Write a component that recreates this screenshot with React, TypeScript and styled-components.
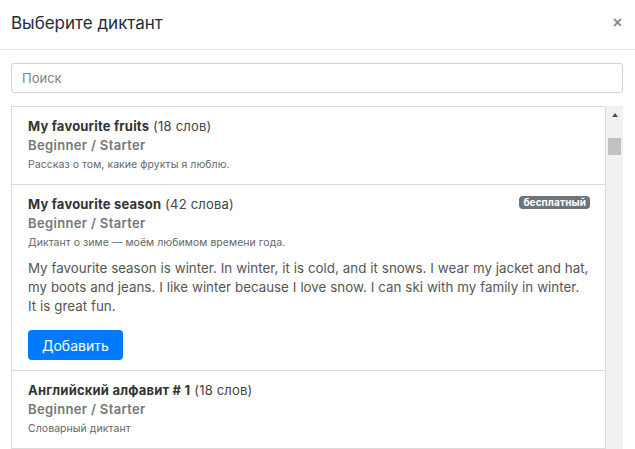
import React from 'react'
import styled, { createGlobalStyle } from 'styled-components'

const GlobalStyle = createGlobalStyle`
  html, body {
    margin: 0;
    padding: 0;
    overflow: hidden;
    background: #fff;
  }
  body {
    font-family: Inter, "Noto Sans", sans-serif;
    color: #333;
  }
  * {
    box-sizing: border-box;
  }
`

interface Dictation {
  id: number
  title: string
  words: string
  level: string
  description: string
  text?: string
  free?: boolean
}

const dictations: Dictation[] = [
  {
    id: 1,
    title: 'My favourite fruits',
    words: '18 слов',
    level: 'Beginner / Starter',
    description: 'Рассказ о том, какие фрукты я люблю.',
  },
  {
    id: 2,
    title: 'My favourite season',
    words: '42 слова',
    level: 'Beginner / Starter',
    description: 'Диктант о зиме — моём любимом времени года.',
    text:
      'My favourite season is winter. In winter, it is cold, and it snows. I wear my jacket and hat, my boots and jeans. I like winter because I love snow. I can ski with my family in winter. It is great fun.',
    free: true,
  },
  {
    id: 3,
    title: 'Английский алфавит # 1',
    words: '18 слов',
    level: 'Beginner / Starter',
    description: 'Словарный диктант',
  },
]

const App: React.FC = () => {
  return (
    <>
      <GlobalStyle />
      <StyledModal>
        <StyledHeader>
          <StyledTitle>Выберите диктант</StyledTitle>
          <StyledClose type="button" aria-label="Закрыть">
            ×
          </StyledClose>
        </StyledHeader>
        <StyledBody>
          <StyledSearch placeholder="Поиск" />
          <StyledScrollArea>
            <StyledList>
              {dictations.map((d) => (
                <StyledItem key={d.id}>
                  {d.free && <StyledBadge>бесплатный</StyledBadge>}
                  <StyledItemTitle>
                    <strong>{d.title}</strong> ({d.words})
                  </StyledItemTitle>
                  <StyledLevel>{d.level}</StyledLevel>
                  <StyledDescription>{d.description}</StyledDescription>
                  {d.text && (
                    <>
                      <StyledText>{d.text}</StyledText>
                      <StyledButton type="button">Добавить</StyledButton>
                    </>
                  )}
                </StyledItem>
              ))}
            </StyledList>
            <StyledRail aria-hidden>
              <StyledArrow />
              <StyledThumb />
            </StyledRail>
          </StyledScrollArea>
        </StyledBody>
      </StyledModal>
    </>
  )
}

const StyledModal = styled.div`
  width: 635px;
  background: #fff;
`

const StyledHeader = styled.div`
  display: flex;
  align-items: center;
  justify-content: space-between;
  height: 50px;
  padding: 0 13px 3px 11px;
  border-bottom: 1px solid #e5e5e5;
`

const StyledTitle = styled.h5`
  margin: 0;
  font-size: 17px;
  font-weight: 400;
  color: #1e2d3b;
`

const StyledClose = styled.button`
  border: 0;
  background: none;
  padding: 0;
  font-family: Arial, "Liberation Sans", sans-serif;
  font-size: 16px;
  font-weight: 700;
  line-height: 1;
  color: #8a8a8a;
  cursor: pointer;
`

const StyledBody = styled.div`
  padding: 13px 12px 0 11px;
`

const StyledSearch = styled.input`
  display: block;
  width: 100%;
  height: 30px;
  padding: 0 10px;
  border: 1px solid #ced4da;
  border-radius: 3px;
  font-family: inherit;
  font-size: 13px;
  color: #495057;
  outline: none;

  &::placeholder {
    color: #7b838a;
  }
`

const StyledScrollArea = styled.div`
  display: flex;
  margin-top: 13px;
  height: 343px;
  overflow: hidden;
`

const StyledList = styled.div`
  flex: 1;
  min-width: 0;
  align-self: flex-start;
  border: 1px solid #dcdcdc;
`

const StyledRail = styled.div`
  display: flex;
  flex-direction: column;
  align-items: center;
  flex: 0 0 17px;
  background: #f1f1f1;
`

const StyledArrow = styled.div`
  margin-top: 7px;
  width: 0;
  height: 0;
  border-left: 3.5px solid transparent;
  border-right: 3.5px solid transparent;
  border-bottom: 4px solid #505050;
`

const StyledThumb = styled.div`
  margin-top: 21px;
  width: 13px;
  height: 17px;
  background: #c1c1c1;
`

const StyledItem = styled.div`
  position: relative;
  padding: 9px 16px 10px;

  & + & {
    border-top: 1px solid #dcdcdc;
  }
`

const StyledBadge = styled.span`
  position: absolute;
  top: 11px;
  right: 15px;
  padding: 1px 4px;
  border-radius: 4px;
  background: #6c757d;
  color: #fff;
  font-size: 10px;
  font-weight: 700;
  line-height: 11px;
  letter-spacing: 0.1px;
`

const StyledItemTitle = styled.div`
  font-size: 13px;
  line-height: 20px;
  color: #444;
  letter-spacing: 0.2px;

  strong {
    font-weight: 700;
    color: #333;
  }
`

const StyledLevel = styled.div`
  font-size: 13px;
  font-weight: 600;
  line-height: 19px;
  letter-spacing: 0.35px;
  color: #777;
`

const StyledDescription = styled.div`
  margin-top: 1px;
  font-size: 10.5px;
  line-height: 18px;
  letter-spacing: 0.05px;
  color: #666;
`

const StyledText = styled.p`
  margin: 7px 0 0;
  font-size: 13.35px;
  line-height: 19px;
  word-spacing: 0.2px;
  color: #555;
`

const StyledButton = styled.button`
  display: inline-block;
  margin-top: 14px;
  height: 30px;
  padding: 0 14px;
  border: 0;
  border-radius: 4px;
  background: #007bff;
  color: #fff;
  font-family: inherit;
  font-size: 14px;
  cursor: pointer;
`

export default App
